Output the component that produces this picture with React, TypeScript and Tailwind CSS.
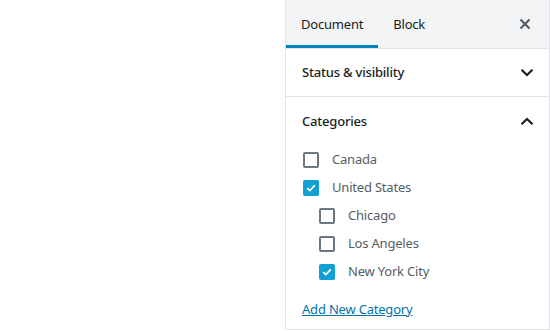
import { useState } from "react";

type Cat = { name: string; checked: boolean; children?: Cat[] };

const categories: Cat[] = [
  { name: "Canada", checked: false },
  {
    name: "United States",
    checked: true,
    children: [
      { name: "Chicago", checked: false },
      { name: "Los Angeles", checked: false },
      { name: "New York City", checked: true },
    ],
  },
];

function Checkbox({ checked }: { checked: boolean }) {
  return checked ? (
    <span className="flex h-4 w-4 shrink-0 items-center justify-center rounded-[2px] bg-[#11a0d2]">
      <svg width="10" height="8" viewBox="0 0 10 8" fill="none">
        <path d="M1.2 4.2 L3.8 6.6 L8.8 1.4" stroke="white" strokeWidth="1.8" />
      </svg>
    </span>
  ) : (
    <span className="h-4 w-4 shrink-0 rounded-[2px] border-2 border-[#6c7781] bg-white" />
  );
}

function CategoryRow({ cat }: { cat: Cat }) {
  return (
    <>
      <label className="flex h-7 items-center">
        <Checkbox checked={cat.checked} />
        <span className="ml-[13px] text-[13px] tracking-[-0.2px] text-[#555d66]">{cat.name}</span>
      </label>
      {cat.children && (
        <div className="pl-4">
          {cat.children.map((c) => (
            <CategoryRow key={c.name} cat={c} />
          ))}
        </div>
      )}
    </>
  );
}

function Chevron({ up }: { up?: boolean }) {
  return (
    <svg width="14" height="9" viewBox="0 0 14 9" fill="none" className={up ? "rotate-180" : ""}>
      <path d="M1.5 1.8 L7 7 L12.5 1.8" stroke="#191e23" strokeWidth="2.2" />
    </svg>
  );
}

export default function App() {
  const [tab, setTab] = useState("Document");
  return (
    <div
      className="flex h-[331px] w-[550px] overflow-hidden bg-white"
      style={{ fontFamily: '"Noto Sans", "Liberation Sans", sans-serif' }}
    >
      <div className="w-[285px]" />

      {/* Settings sidebar */}
      <aside className="flex h-[330px] w-[265px] flex-col border-x border-b border-[#e2e4e7]">
        <div className="flex h-[49px] shrink-0 items-stretch border-b border-[#e2e4e7] bg-[#f3f4f5]">
          {["Document", "Block"].map((t) => (
            <button
              key={t}
              onClick={() => setTab(t)}
              className={
                tab === t
                  ? "px-[15px] pt-[1px] text-[13px] tracking-[-0.2px] text-[#191e23] shadow-[inset_0_-3px_0_#0085ba]"
                  : "px-[15px] pt-[1px] text-[13px] tracking-[-0.2px] text-[#191e23]"
              }
            >
              {t}
            </button>
          ))}
          <button className="ml-auto mr-[12px] flex w-6 items-center justify-center">
            <svg width="12" height="12" viewBox="0 0 12 12" fill="none">
              <path d="M1.5 1.5 L10.5 10.5 M10.5 1.5 L1.5 10.5" stroke="#555d66" strokeWidth="2.2" />
            </svg>
          </button>
        </div>

        <button className="flex h-12 shrink-0 items-center justify-between border-b border-[#e2e4e7] pl-4 pr-[15px]">
          <span className="pt-[1px] text-[13px] font-medium tracking-[-0.2px] text-[#191e23]">
            Status &amp; visibility
          </span>
          <Chevron />
        </button>

        <div className="flex flex-col">
          <button className="flex h-12 shrink-0 items-center justify-between pl-4 pr-[15px]">
            <span className="pt-[1px] text-[13px] font-medium tracking-[-0.2px] text-[#191e23]">Categories</span>
            <Chevron up />
          </button>
          <div className="mt-[1px] pl-[17px]">
            {categories.map((c) => (
              <CategoryRow key={c.name} cat={c} />
            ))}
          </div>
          <a
            href="#"
            className="ml-4 mt-[13px] self-start text-[13px] leading-5 tracking-[-0.2px] text-[#0073aa] underline"
          >
            Add New Category
          </a>
        </div>
      </aside>
    </div>
  );
}
